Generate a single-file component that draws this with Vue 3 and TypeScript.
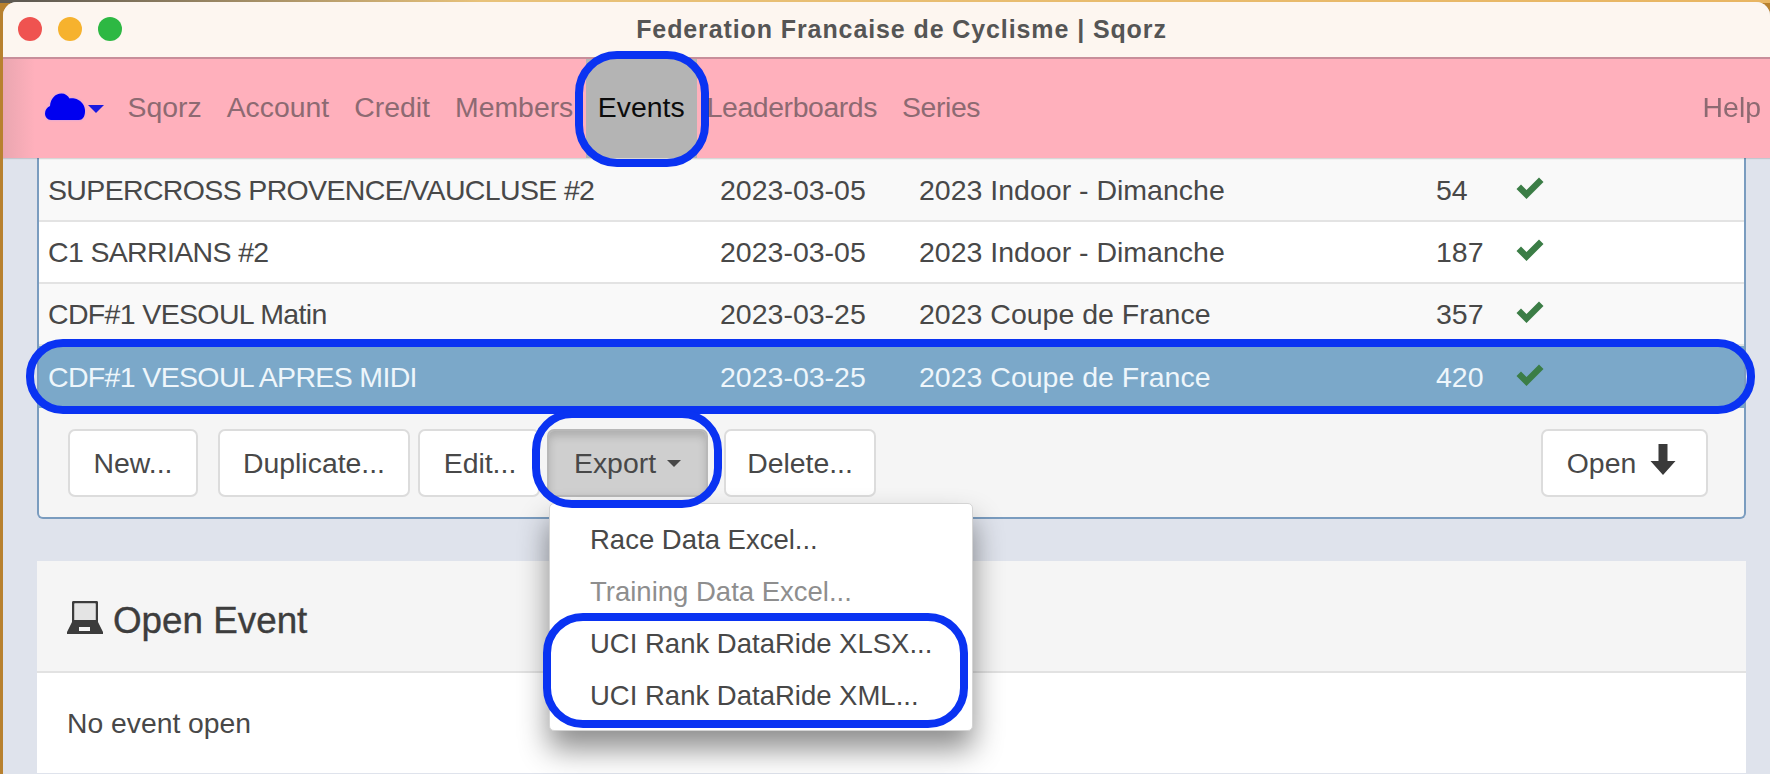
<script setup lang="ts">
interface EventRow { name: string; date: string; series: string; count: number; selected?: boolean }
const rows: EventRow[] = [
  { name: 'SUPERCROSS PROVENCE/VAUCLUSE #2', date: '2023-03-05', series: '2023 Indoor - Dimanche', count: 54 },
  { name: 'C1 SARRIANS #2', date: '2023-03-05', series: '2023 Indoor - Dimanche', count: 187 },
  { name: 'CDF#1 VESOUL Matin', date: '2023-03-25', series: '2023 Coupe de France', count: 357 },
  { name: 'CDF#1 VESOUL APRES MIDI', date: '2023-03-25', series: '2023 Coupe de France', count: 420, selected: true },
]
const navLeft = ['Sqorz', 'Account', 'Credit', 'Members']
</script>

<template>
  <div class="desktop">
    <div class="window">
      <header class="titlebar">
        <div class="lights">
          <span class="light red"></span>
          <span class="light yellow"></span>
          <span class="light green"></span>
        </div>
        <div class="title">Federation Francaise de Cyclisme | Sqorz</div>
      </header>

      <nav class="nav">
        <a class="brand">
          <svg class="cloud" viewBox="0 0 40 28" width="40" height="28">
            <path fill="#0000f0" d="M6 27C2.5 27 0 24 0 20.5C0 17 2 14.5 5 13C5.5 6 10 0.5 16.5 0.5C20 0.5 23 2.5 24.5 5.5C26 5 27.5 5 29.5 5.5C35 6.5 39.5 11 40 17C40.3 23 38 27 34 27Z"/>
          </svg>
          <span class="nav-caret"></span>
        </a>
        <a v-for="item in navLeft" :key="item" class="nav-item">{{ item }}</a>
        <a class="nav-item active">Events<span class="ring ring-events"></span></a>
        <a class="nav-item tight first-after">Leaderboards</a>
        <a class="nav-item tight">Series</a>
        <a class="nav-item help">Help</a>
      </nav>

      <main class="content">
        <section class="panel">
          <div
            v-for="(row, i) in rows"
            :key="row.name"
            class="row"
            :class="{ striped: i % 2 === 0, selected: row.selected }"
          >
            <div class="cell name">{{ row.name }}</div>
            <div class="cell">{{ row.date }}</div>
            <div class="cell">{{ row.series }}</div>
            <div class="cell">{{ row.count }}</div>
            <div class="cell">
              <svg class="check" viewBox="0 0 28 22" width="28" height="22">
                <path fill="#3b7d46" d="M0.5 12L5 7.5L10.5 13L23 0.5L27.5 5L10.5 22Z"/>
              </svg>
            </div>
            <span v-if="row.selected" class="ring ring-row"></span>
          </div>

          <div class="toolbar">
            <button class="btn b-new">New...</button>
            <button class="btn b-dup">Duplicate...</button>
            <button class="btn b-edit">Edit...</button>
            <div class="export-wrap">
              <button class="btn b-export">Export <span class="caret"></span></button>
              <span class="ring ring-export"></span>
              <div class="menu">
                <div class="menu-item">Race Data Excel...</div>
                <div class="menu-item disabled">Training Data Excel...</div>
                <div class="menu-item">UCI Rank DataRide XLSX...</div>
                <div class="menu-item">UCI Rank DataRide XML...</div>
                <span class="ring ring-uci"></span>
              </div>
            </div>
            <button class="btn b-del">Delete...</button>
            <button class="btn b-open">
              Open
              <svg class="arrow" viewBox="0 0 26 31" width="26" height="31">
                <path fill="#3a3a3a" d="M8.5 0H17.5V17H25.5L13 31L.5 17H8.5Z"/>
              </svg>
            </button>
          </div>
        </section>

        <section class="card">
          <div class="card-head">
            <svg class="laptop" viewBox="0 0 36 33" width="36" height="33">
              <path fill="#3c3c3c" fill-rule="evenodd" d="M6.5 0H29.5C30.5 0 31 .5 31 1.5V21H5V1.5C5 .5 5.5 0 6.5 0ZM7.5 2.5V19H28.5V2.5Z"/>
              <path fill="#e4e4e4" d="M7.5 2.5H28.5V19H7.5Z"/>
              <path fill="#3c3c3c" fill-rule="evenodd" d="M5 21H31L36 31V33H0V31ZM12 26V30H23V26Z"/>
            </svg>
            <h3>Open Event</h3>
          </div>
          <div class="card-body">No event open</div>
        </section>
      </main>
    </div>
  </div>
</template>

<style>
html, body { margin: 0; background: #b8812f; overflow: hidden; }
</style>

<style scoped>
.desktop {
  width: 1770px;
  height: 774px;
  overflow: hidden;
  padding: 2px 0 0 3px;
  box-sizing: border-box;
  background: linear-gradient(90deg, #5f5a52 0 24px, #e8c27a 480px, #e8b562 100%);
  background-size: 100% 3px;
  background-repeat: no-repeat;
  background-color: #b8812f;
  font-family: "Liberation Sans", Arial, sans-serif;
  color: #484848;
}
.window {
  height: 772px;
  background: #dfe3ec;
  border-radius: 14px 14px 0 0;
  overflow: hidden;
  filter: blur(0.45px);
}
.titlebar {
  height: 55px;
  position: relative;
  display: flex;
  align-items: center;
  justify-content: center;
  background: #fdf6f0;
}
.lights { position: absolute; left: 15px; top: 15px; display: flex; gap: 16px; }
.light { width: 24px; height: 24px; border-radius: 50%; }
.red { background: #ef5350; }
.yellow { background: #f6b22e; }
.green { background: #2db843; }
.title { font-size: 25px; font-weight: 700; letter-spacing: 0.9px; color: #555; padding-left: 30px; }

.nav {
  height: 99px;
  display: flex;
  align-items: stretch;
  background: linear-gradient(90deg, #eaa6b0 0, #ffb0bc 32px);
  border-top: 2px solid #c88e9a;
  box-shadow: 0 1px 1px rgba(0,0,0,.12);
  position: relative;
  z-index: 3;
  font-size: 28.4px;
}
.brand { display: flex; align-items: center; padding: 0 0 3px 42px; width: 70px; }
.cloud { display: block; filter: drop-shadow(0 0 1px #c4a2f5); }
.nav-caret { width: 0; height: 0; margin: 4px 0 0 3px; border: 8px solid transparent; border-top: 8px solid #1a1ae0; border-bottom: 0; }
.nav-item {
  display: flex;
  align-items: center;
  padding: 0 12.5px 2px;
  color: #8d6a72;
  position: relative;
}
.nav-item.tight { letter-spacing: -0.4px; }
.nav-item.first-after { padding-left: 10px; }
.nav-item.active { background: #b4b4b4; color: #0c0c0c; padding: 0 12px 2px; }
.help { margin-left: auto; padding-right: 9px; }

.ring {
  position: absolute;
  border: 8px solid #0a33f2;
  box-sizing: border-box;
  pointer-events: none;
}
.ring-events { left: -11px; right: -12px; top: -8px; bottom: -9px; border-radius: 42px; }
.ring-row { left: -13px; right: -11px; top: -7px; bottom: -6px; border-radius: 37px; z-index: 2; }
.ring-export { left: -15px; right: -14px; top: -19px; bottom: -11px; border-radius: 40px; z-index: 5; }
.ring-uci { left: -7px; right: 4px; top: 109px; bottom: 2px; border-radius: 40px; }

.content { padding: 0 24px 0 34px; }
.panel {
  background: #f5f5f5;
  border: 2px solid #7a9cbf;
  border-top: 0;
  border-radius: 0 0 6px 6px;
  height: 361px;
  padding-top: 2px;
  box-sizing: border-box;
}
.row {
  display: grid;
  grid-template-columns: 681px 199px 517px 80px 1fr;
  height: 62px;
  padding-top: 1px;
  align-items: center;
  font-size: 28.5px;
  background: #fff;
  border-bottom: 2px solid #e3e3e3;
  box-sizing: border-box;
  position: relative;
}
.row.striped { background: #f9f9f9; }
.row.selected { background: #7ba8c9; color: #eef6fb; border-bottom: 0; }
.cell { white-space: nowrap; }
.cell.name { padding-left: 9px; letter-spacing: -0.65px; }
.check { display: block; margin-top: -5px; }

.toolbar { display: flex; padding: 21px 36px 0 29px; align-items: flex-start; }
.btn {
  height: 68px;
  background: #fff;
  border: 2px solid #dcdcdc;
  border-radius: 7px;
  font: inherit;
  font-size: 28.4px;
  color: #484848;
  padding: 0;
  display: flex;
  align-items: center;
  justify-content: center;
  box-sizing: border-box;
}
.b-new { width: 130px; margin-right: 20px; }
.b-dup { width: 192px; margin-right: 8px; }
.b-edit { width: 122px; margin-right: 7px; padding-left: 2px; }
.b-export {
  width: 161px;
  background: #cfcfcf;
  border-color: #b8b8b8;
  box-shadow: inset 0 5px 8px rgba(0,0,0,.16);
  gap: 11px;
}
.b-del { width: 152px; margin-left: 16px; }
.b-open { width: 167px; margin-left: auto; gap: 14px; padding-right: 6px; }
.arrow { margin-top: -8px; }
.caret { width: 0; height: 0; border: 7px solid transparent; border-top: 7px solid #484848; border-bottom: 0; }

.export-wrap { position: relative; display: flex; }
.menu {
  position: absolute;
  left: 2px;
  top: 74px;
  width: 424px;
  height: 228px;
  padding-top: 10px;
  box-sizing: border-box;
  background: #fff;
  border: 1px solid #d4d4d4;
  border-radius: 5px;
  box-shadow: 0 18px 30px rgba(0,0,0,.45);
  z-index: 4;
}
.menu-item { height: 52px; line-height: 52px; padding-left: 40px; font-size: 27.5px; color: #484848; white-space: nowrap; }
.menu-item.disabled { color: #8e8e8e; }

.card { margin-top: 42px; background: #fff; border-radius: 6px 6px 0 0; }
.card-head {
  height: 112px;
  padding: 6px 0 0 30px;
  background: #f5f5f5;
  border-bottom: 2px solid #e2e2e2;
  box-sizing: border-box;
  display: flex;
  align-items: center;
  gap: 10px;
}
.laptop { display: block; margin-top: -3px; }
.card-head h3 { margin: 4px 0 0; font-size: 36.8px; font-weight: 400; color: #3d3d3d; -webkit-text-stroke: 0.4px #3d3d3d; }
.card-body { padding: 33px 30px; font-size: 28.3px; line-height: 34px; }
</style>
